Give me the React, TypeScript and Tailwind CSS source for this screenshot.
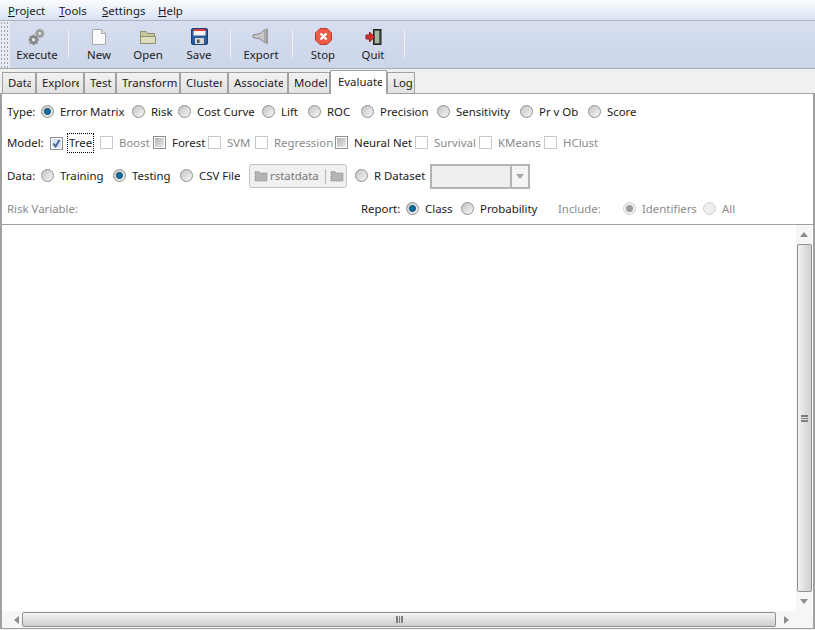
import React from "react";

function Radio({ label, on, off, w, disabledOn }: { label: string; on?: boolean; off?: boolean; w: string; disabledOn?: boolean }) {
  return (
    <div className={`flex items-center shrink-0 ${w}`}>
      <span className={`relative w-[13px] h-[13px] rounded-full border shrink-0 flex items-center justify-center ${off ? "border-[#cfcfcf] bg-[#eeeeee]" : "border-[#8e8f8f] bg-gradient-to-br from-[#c4c4c4] to-[#f6f6f6]"}`}>
        {on && <span className="w-[7px] h-[7px] rounded-full bg-[#0f6d9f] border border-[#0b4a72]" />}
        {disabledOn && <span className="w-[7px] h-[7px] rounded-full bg-[#9a9a9a]" />}
      </span>
      <span className={`ml-[6px] whitespace-nowrap ${off ? "text-[#8a8a8a]" : "text-[#1a1a1a]"}`}>{label}</span>
    </div>
  );
}

function Check({ label, off, checked, focus, w }: { label: string; off?: boolean; checked?: boolean; focus?: boolean; w: string }) {
  return (
    <div className={`flex items-center shrink-0 ${w}`}>
      <span className={`w-[13px] h-[13px] border shrink-0 flex items-center justify-center ${off ? "border-[#c8c8c8] bg-white" : "border-[#8e8f8f] bg-white p-[1px]"}`}>
        {checked ? (
          <svg width="9" height="9" viewBox="0 0 9 9">
            <rect x="0" y="0" width="9" height="9" fill="#d9e4f5" />
            <path d="M1.5 4.5 L3.6 7.5 L7.5 1" stroke="#3b5f9c" strokeWidth="1.8" fill="none" />
          </svg>
        ) : !off ? (
          <span className="w-full h-full bg-gradient-to-br from-[#b4b4b4] to-[#ececec]" />
        ) : null}
      </span>
      <span className={`whitespace-nowrap ${focus ? "ml-[4px] pl-[1px] w-[27px] border border-dotted border-black leading-[18px] h-[20px] -mt-[1px]" : "ml-[6px]"} ${off ? "text-[#8a8a8a]" : "text-[#1a1a1a]"}`}>{label}</span>
    </div>
  );
}

function Tab({ label, w, clip }: { label: string; w: string; clip: string }) {
  return (
    <div className={`h-[21px] shrink-0 border border-b-0 border-[#a0a0a0] bg-gradient-to-b from-[#f2f2f2] to-[#e2e2e2] flex items-center pl-[5px] rounded-t-[1px] ${w}`}>
      <span className={`overflow-hidden whitespace-nowrap block ${clip}`}>{label}</span>
    </div>
  );
}

function Tool({ label, w, children }: { label: string; w: string; children: React.ReactNode }) {
  return (
    <div className={`flex flex-col items-center shrink-0 ${w}`}>
      <div className="h-[20px] mt-[1px] flex items-center justify-center">{children}</div>
      <div className="h-[19px] -mt-[2px] leading-[19px] text-[#1a1a1a]">{label}</div>
    </div>
  );
}

function Sep({ w }: { w: string }) {
  return (
    <div className={`flex justify-center shrink-0 h-[29px] self-center ${w}`}>
      <div className="w-[1px] h-full bg-[#a9aeb8] border-r border-[#eef1f8]" />
    </div>
  );
}

function Gear({ cx, cy, r, fill }: { cx: number; cy: number; r: number; fill: string }) {
  const angles = [0, 45, 90, 135];
  return (
    <g>
      {angles.map((a) => (
        <rect key={a} x={cx - 1.1} y={cy - r - 1.2} width={2.2} height={2 * r + 2.4} fill={fill} transform={`rotate(${a} ${cx} ${cy})`} />
      ))}
      <circle cx={cx} cy={cy} r={r} fill={fill} />
      <circle cx={cx} cy={cy} r={r * 0.42} fill="#e4e7ee" />
    </g>
  );
}

const M = ({ k, r, w }: { k: string; r: string; w: string }) => (
  <span className={`shrink-0 ${w}`}><span className="underline">{k}</span>{r}</span>
);

export default function App() {
  return (
    <div className="w-[815px] h-[630px] flex flex-col bg-[#f0f0f0] text-[11.4px] overflow-hidden text-[#1a1a1a] font-['Noto_Sans',sans-serif]">
      {/* menu */}
      <div className="h-[21px] shrink-0 flex items-center pl-[8px] pt-[1px] bg-gradient-to-b from-[#fbfcfe] to-[#d9e2f2] border-b border-[#aeb4bf]">
        <M k="P" r="roject" w="w-[51px]" />
        <M k="T" r="ools" w="w-[43px]" />
        <M k="S" r="ettings" w="w-[56px]" />
        <M k="H" r="elp" w="w-[30px]" />
      </div>
      {/* toolbar */}
      <div className="h-[48px] shrink-0 flex items-center bg-gradient-to-b from-[#d6deef] to-[#ccd6e9] border-b border-[#a6abb5]">
        <div className="w-[10px] h-full shrink-0 bg-[#e8ebf2] bg-[radial-gradient(#9ea3ad_1px,transparent_1px)] bg-[length:3px_4px]" />
        <Tool label="Execute" w="w-[54px]">
          <svg width="18" height="18" viewBox="0 0 18 18">
            <Gear cx={11.8} cy={5.5} r={3.4} fill="#9a9a9a" />
            <Gear cx={5.6} cy={11.8} r={4} fill="#868686" />
          </svg>
        </Tool>
        <Sep w="w-[8px]" />
        <Tool label="New" w="w-[54px]">
          <svg width="16" height="18" viewBox="0 0 16 18">
            <path d="M1.5 1.5 H10.5 L14.5 5.5 V16 Q14.5 16.5 14 16.5 H2 Q1.5 16.5 1.5 16 Z" fill="#fbfbfb" stroke="#a8a8a8" />
            <path d="M10.5 1.5 V5.5 H14.5" fill="#e2e2e2" stroke="#a8a8a8" />
          </svg>
        </Tool>
        <Tool label="Open" w="w-[44px]">
          <svg width="18" height="16" viewBox="0 0 18 16">
            <path d="M1.5 14.5 V2.5 H7 L8.5 4.5 H15.5 V14.5 Z" fill="#c6c89c" stroke="#8d8f72" />
            <path d="M1.5 14.5 V7.5 H16.5 V14.5 Z" fill="#dcdebc" stroke="#8d8f72" />
          </svg>
        </Tool>
        <Tool label="Save" w="w-[58px]">
          <svg width="17" height="17" viewBox="0 0 17 17">
            <rect x="0.5" y="0.5" width="16" height="16" rx="1.5" fill="#2c5c9e" stroke="#1d3f73" />
            <rect x="2.5" y="1" width="12" height="2" fill="#e23b3b" />
            <rect x="2.5" y="3" width="12" height="4.5" fill="#f4f4f4" />
            <rect x="4" y="10" width="9" height="6" fill="#d6d6d6" />
            <rect x="6" y="11.5" width="2.5" height="3.5" fill="#555" />
          </svg>
        </Tool>
        <Sep w="w-[4px]" />
        <Tool label="Export" w="w-[58px]">
          <svg width="18" height="17" viewBox="0 0 18 17">
            <path d="M1 7 L8 5.5 L13 1.5 V15 L8 11 L1 9.5 Z" fill="#c6c6c6" stroke="#8a8a8a" />
            <rect x="14" y="0.5" width="2" height="15.5" fill="#9a9a9a" />
          </svg>
        </Tool>
        <Sep w="w-[4px]" />
        <Tool label="Stop" w="w-[58px]">
          <svg width="17" height="17" viewBox="0 0 17 17">
            <path d="M5 0.5 H12 L16.5 5 V12 L12 16.5 H5 L0.5 12 V5 Z" fill="#ee5a45" stroke="#b83a2a" />
            <path d="M5.5 5.5 L11.5 11.5 M11.5 5.5 L5.5 11.5" stroke="#fff" strokeWidth="2.4" />
          </svg>
        </Tool>
        <Tool label="Quit" w="w-[42px]">
          <svg width="17" height="16" viewBox="0 0 17 16">
            <rect x="8.5" y="0.5" width="7.5" height="15" fill="#4d5a50" stroke="#222" />
            <rect x="10" y="2" width="4" height="12" fill="#a5b8a2" />
            <path d="M1 6 H4.5 V3 L9.5 8 L4.5 13 V10 H1 Z" fill="#d9302a" stroke="#8f1a16" />
          </svg>
        </Tool>
        <Sep w="w-[20px]" />
      </div>
      {/* tabs */}
      <div className="h-[24px] shrink-0 flex items-end pl-[2px]">
        <Tab label="Data" w="w-[34px]" clip="w-[23px]" />
        <Tab label="Explore" w="w-[48px]" clip="w-[37px]" />
        <Tab label="Test" w="w-[32px]" clip="w-[26px]" />
        <Tab label="Transform" w="w-[64px]" clip="w-[57px]" />
        <Tab label="Cluster" w="w-[48px]" clip="w-[36px]" />
        <Tab label="Associate" w="w-[60px]" clip="w-[49px]" />
        <Tab label="Model" w="w-[42px]" clip="w-[33px]" />
        <div className="h-[24px] w-[57px] shrink-0 border border-b-0 border-[#a0a0a0] bg-white flex items-center pl-[7px] pb-[2px] relative z-10 -mb-[1px]">
          <span className="whitespace-nowrap overflow-hidden w-[44px] block">Evaluate</span>
        </div>
        <Tab label="Log" w="w-[28px]" clip="w-[20px]" />
      </div>
      {/* panel */}
      <div className="flex-1 min-h-0 mb-[1px] flex flex-col bg-white border border-[#a0a0a0] border-l-2 border-r-2">
        <div className="h-[37px] shrink-0 flex items-center pl-[5px] pb-[2px]">
          <span className="w-[34px] shrink-0">Type:</span>
          <Radio label="Error Matrix" on w="w-[91px]" />
          <Radio label="Risk" w="w-[46px]" />
          <Radio label="Cost Curve" w="w-[84px]" />
          <Radio label="Lift" w="w-[46px]" />
          <Radio label="ROC" w="w-[53px]" />
          <Radio label="Precision" w="w-[76px]" />
          <Radio label="Sensitivity" w="w-[83px]" />
          <Radio label="Pr v Ob" w="w-[68px]" />
          <Radio label="Score" w="w-[60px]" />
        </div>
        <div className="h-[24px] shrink-0 flex items-center pl-[5px]">
          <span className="w-[43px] shrink-0">Model:</span>
          <Check label="Tree" checked focus w="w-[50px]" />
          <Check label="Boost" off w="w-[53px]" />
          <Check label="Forest" w="w-[55px]" />
          <Check label="SVM" off w="w-[47px]" />
          <Check label="Regression" off w="w-[80px]" />
          <Check label="Neural Net" w="w-[80px]" />
          <Check label="Survival" off w="w-[64px]" />
          <Check label="KMeans" off w="w-[65px]" />
          <Check label="HClust" off w="w-[60px]" />
        </div>
        <div className="h-[42px] shrink-0 flex items-center pl-[5px]">
          <span className="w-[34px] shrink-0">Data:</span>
          <Radio label="Training" w="w-[72px]" />
          <Radio label="Testing" on w="w-[67px]" />
          <Radio label="CSV File" w="w-[69px]" />
          <div className="w-[98px] h-[24px] shrink-0 mr-[8px] border border-[#c4c4c4] rounded-[3px] bg-[#f0f0f0] flex items-center pl-[4px] text-[#777777]">
            <svg width="14" height="12" viewBox="0 0 14 12" className="shrink-0"><path d="M1 11 V1.5 H5 L6 3 H13 V11 Z" fill="#b4b4b4" stroke="#8a8a8a" strokeDasharray="1 1" /></svg>
            <span className="ml-[2px] w-[55px] shrink-0">rstatdata</span>
            <div className="w-[1px] h-[15px] bg-[#b8b8b8] shrink-0" />
            <svg width="14" height="12" viewBox="0 0 14 12" className="ml-[4px] shrink-0"><path d="M1 11 V1.5 H5 L6 3 H13 V11 Z" fill="#b4b4b4" stroke="#8a8a8a" strokeDasharray="1 1" /></svg>
          </div>
          <Radio label="R Dataset" w="w-[75px]" />
          <div className="w-[100px] h-[25px] shrink-0 border-2 border-[#b4b4b4] bg-[#efefef] flex justify-end">
            <div className="w-[18px] h-full border-l-2 border-[#b4b4b4] bg-[#f4f4f4] flex items-center justify-center">
              <svg width="8" height="5" viewBox="0 0 8 5"><path d="M0 0 H8 L4 5 Z" fill="#a8a8a8" /></svg>
            </div>
          </div>
        </div>
        <div className="h-[24px] shrink-0 flex items-center pl-[5px]">
          <span className="w-[354px] shrink-0 text-[#8a8a8a]">Risk Variable:</span>
          <span className="w-[45px] shrink-0">Report:</span>
          <Radio label="Class" on w="w-[55px]" />
          <Radio label="Probability" w="w-[97px]" />
          <span className="w-[65px] shrink-0 text-[#8a8a8a]">Include:</span>
          <Radio label="Identifiers" off disabledOn w="w-[80px]" />
          <Radio label="All" off w="w-[40px]" />
        </div>
        <div className="flex-1 min-h-0 mt-[3px] border-t border-[#a0a0a0] flex flex-col">
          <div className="flex-1 min-h-0 flex">
            <div className="flex-1" />
            <div className="w-[16px] mr-[1px] shrink-0 flex flex-col items-center bg-[#f6f6f6]">
              <div className="h-[19px] shrink-0 flex items-center justify-center">
                <svg width="8" height="5" viewBox="0 0 8 5"><path d="M0 5 H8 L4 0 Z" fill="#8c8c8c" /></svg>
              </div>
              <div className="flex-1 w-[15px] border border-[#8f8f8f] rounded-[2px] bg-gradient-to-r from-[#f2f2f2] to-[#cfcfcf] flex items-center justify-center">
                <div className="w-[7px] h-[7px] border-y-2 border-[#7d7d7d] relative after:content-[''] after:absolute after:left-0 after:right-0 after:top-[1.5px] after:h-[1px] after:bg-[#7d7d7d]" />
              </div>
              <div className="h-[19px] shrink-0 flex items-center justify-center">
                <svg width="8" height="5" viewBox="0 0 8 5"><path d="M0 0 H8 L4 5 Z" fill="#8c8c8c" /></svg>
              </div>
            </div>
          </div>
          <div className="h-[17px] shrink-0 flex items-center pl-[8px] pr-[17px] bg-[#f6f6f6]">
            <div className="w-[12px] shrink-0 flex justify-center">
              <svg width="5" height="8" viewBox="0 0 5 8"><path d="M5 0 V8 L0 4 Z" fill="#8c8c8c" /></svg>
            </div>
            <div className="flex-1 h-[15px] border border-[#8f8f8f] rounded-[2px] bg-gradient-to-b from-[#f2f2f2] to-[#cfcfcf] flex items-center justify-center">
              <div className="w-[7px] h-[7px] border-x-2 border-[#7d7d7d] relative after:content-[''] after:absolute after:top-0 after:bottom-0 after:left-[1.5px] after:w-[1px] after:bg-[#7d7d7d]" />
            </div>
            <div className="w-[20px] shrink-0 flex justify-center">
              <svg width="5" height="8" viewBox="0 0 5 8"><path d="M0 0 V8 L5 4 Z" fill="#8c8c8c" /></svg>
            </div>
          </div>
        </div>
      </div>
    </div>
  );
}
